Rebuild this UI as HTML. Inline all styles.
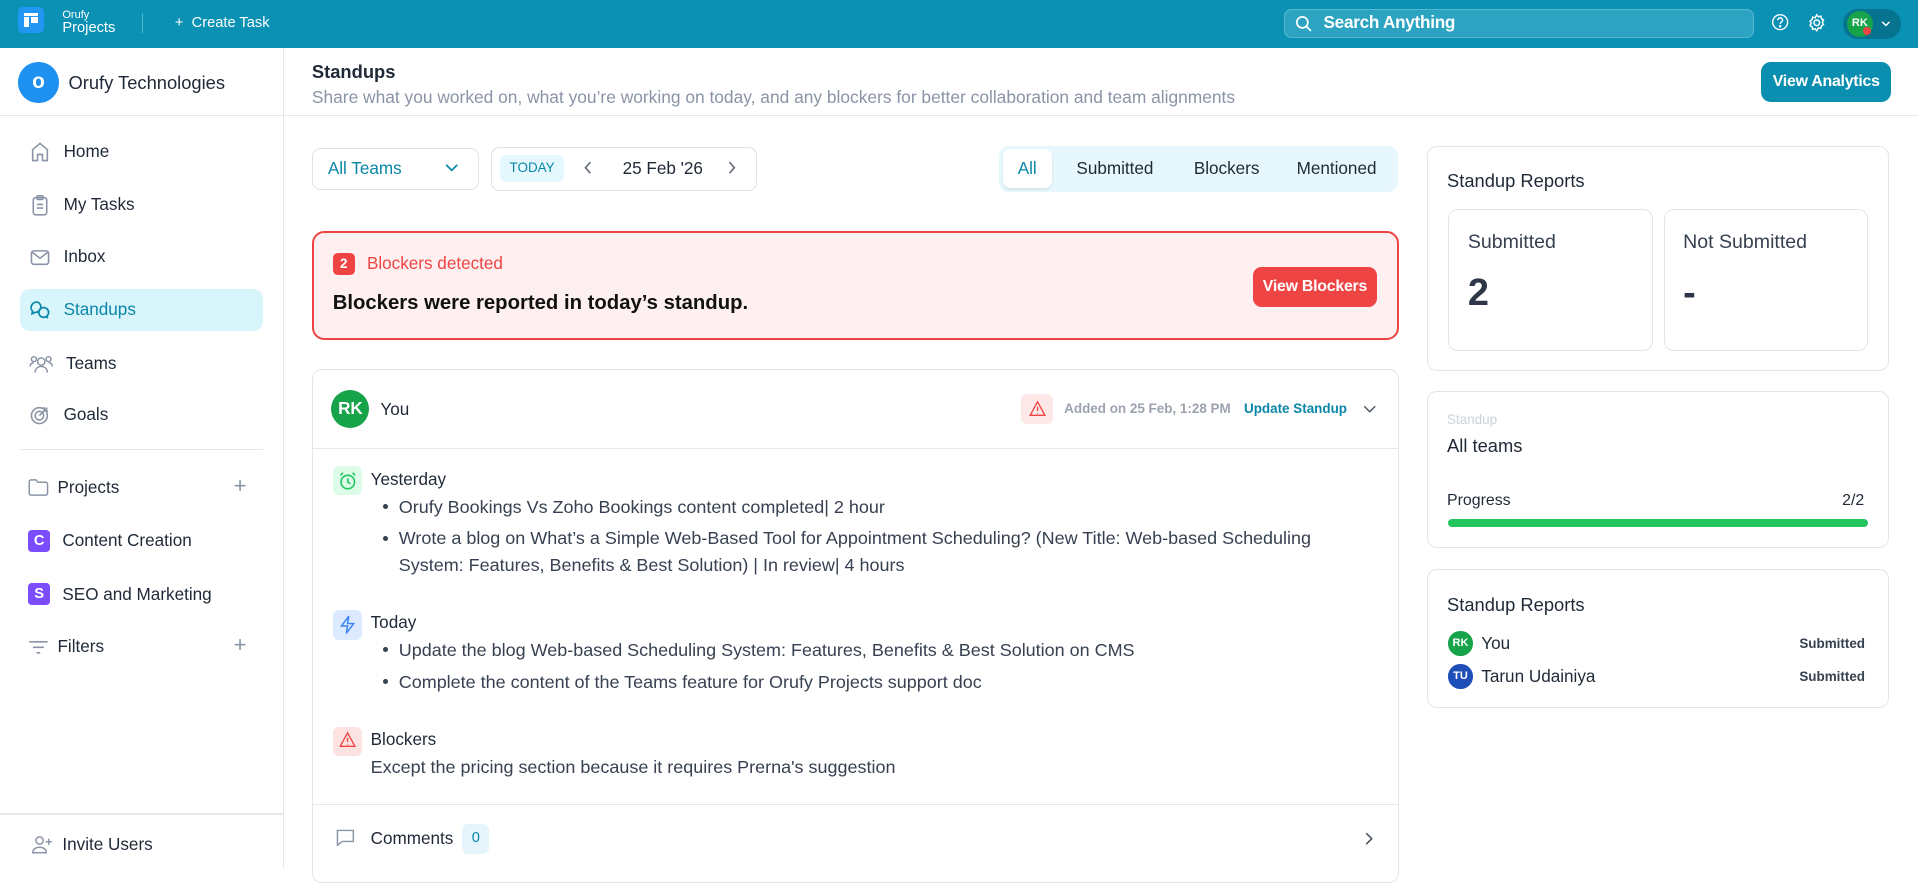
<!DOCTYPE html>
<html><head><meta charset="utf-8"><style>
html{zoom:1.2232}
*{box-sizing:border-box;margin:0;padding:0}
body{width:1568px;height:710px;overflow:hidden;font-family:"Liberation Sans",sans-serif;color:#1f2937;background:#fff;position:relative}
.a{position:absolute}
.t{white-space:nowrap}
svg{display:block}
.nav{position:absolute;left:16px;width:199px;height:35px;display:flex;align-items:center;padding-left:8px;font-size:14px;color:#1f2937;border-radius:8px}
.nav svg{margin-right:10px}
.card{position:absolute;border:1px solid #e2e5ea;border-radius:8px;background:#fff}
.bul{position:absolute;left:313px;width:4px;height:4px;border-radius:50%;background:#374151}
.txt{position:absolute;left:326px;font-size:14.7px;color:#374151;white-space:nowrap}
</style></head><body>
<!-- topbar -->
<div class="a" style="left:0;top:0;width:1568px;height:39px;background:#0a91b4"></div>
<div class="a" style="left:15px;top:6px;width:21px;height:21px;background:#2196f3;border-radius:4px">
<div class="a" style="left:5px;top:5px;width:11px;height:2px;background:#fff"></div>
<div class="a" style="left:5px;top:8px;width:4px;height:8px;background:#fff"></div>
<div class="a" style="left:10px;top:8px;width:6px;height:5px;background:#fff"></div></div>
<div class="a t" style="left:51px;top:7px;font-size:9px;color:#fff">Orufy</div>
<div class="a t" style="left:51px;top:16px;font-size:12px;color:#fff">Projects</div>
<div class="a" style="left:116px;top:11px;width:1px;height:16px;background:#4fb5cf"></div>
<div class="a t" style="left:143px;top:12px;font-size:12px;color:#fff">+&nbsp; Create Task</div>
<div class="a" style="left:1050px;top:7px;width:384px;height:24px;background:#2ca4c1;border:1px solid #55b8d0;border-radius:6px"></div>
<svg class="a" style="left:1059px;top:12px" width="14" height="14" viewBox="0 0 14 14" fill="none" stroke="#fff" stroke-width="1.4"><circle cx="6" cy="6" r="4.5"/><path d="M9.5 9.5L13 13"/></svg>
<div class="a t" style="left:1082px;top:11px;font-size:14px;color:#fff;font-weight:bold;letter-spacing:-0.2px">Search Anything</div>
<svg class="a" style="left:1448px;top:11px" width="15" height="15" viewBox="0 0 16 16" fill="none" stroke="#fff" stroke-width="1.2"><circle cx="8" cy="8" r="6.5"/><path d="M6 6.3a2 2 0 113 1.7c-.7.4-1 .8-1 1.6"/><circle cx="8" cy="11.6" r=".5" fill="#fff"/></svg>
<svg class="a" style="left:1477px;top:11px" width="16" height="16" viewBox="0 0 16 16" fill="none" stroke="#fff" stroke-width="1.2"><circle cx="8" cy="8" r="2.3"/><path d="M8 1.5l1.3 1.6 2-.5.5 2 1.7 1.2-1 1.8 1 1.8-1.7 1.2-.5 2-2-.5L8 14.5l-1.3-1.6-2 .5-.5-2L2.5 10.2l1-1.8-1-1.8 1.7-1.2.5-2 2 .5z"/></svg>
<div class="a" style="left:1507px;top:7px;width:47px;height:25px;background:#07748f;border-radius:13px"></div>
<div class="a" style="left:1510px;top:9px;width:21px;height:21px;background:#16a34a;border-radius:50%;color:#fff;font-size:9px;font-weight:bold;text-align:center;line-height:21px">RK</div>
<div class="a" style="left:1523px;top:22px;width:7px;height:7px;background:#ef4444;border-radius:50%"></div>
<svg class="a" style="left:1538px;top:16px" width="8" height="6" viewBox="0 0 8 6" fill="none" stroke="#fff" stroke-width="1.2"><path d="M1 1.5l3 3 3-3"/></svg>
<!-- sidebar -->
<div class="a" style="left:231px;top:39px;width:1px;height:671px;background:#e5e7eb"></div>
<div class="a" style="left:0;top:94px;width:1568px;height:1px;background:#e5e7eb"></div>
<div class="a" style="left:15px;top:51px;width:33px;height:33px;border-radius:50%;background:#1e90f0;color:#fff;font-weight:bold;font-size:17px;text-align:center;line-height:33px">o</div>
<div class="a t" style="left:56px;top:59px;font-size:15px;color:#1f2937">Orufy Technologies</div>
<div class="nav" style="top:107px"><svg width="18" height="18" viewBox="0 0 18 18" fill="none" stroke="#8a94a6" stroke-width="1.3"><path d="M3 16V7l6-5 6 5v9h-4v-5H7v5z"/></svg>Home</div>
<div class="nav" style="top:150px"><svg width="18" height="18" viewBox="0 0 18 18" fill="none" stroke="#8a94a6" stroke-width="1.3"><rect x="3.5" y="3" width="11" height="14" rx="2"/><rect x="6.5" y="1.5" width="5" height="3" rx="1"/><path d="M6.5 8.5h5M6.5 11.5h5"/></svg>My Tasks</div>
<div class="nav" style="top:193px"><svg width="18" height="18" viewBox="0 0 18 18" fill="none" stroke="#8a94a6" stroke-width="1.3"><rect x="2" y="4" width="14" height="11" rx="2"/><path d="M2.5 5l6.5 5 6.5-5"/></svg>Inbox</div>
<div class="nav" style="top:236px;background:#d9f5fc;color:#0a87a8"><svg width="18" height="18" viewBox="0 0 18 18" fill="none" stroke="#0a87a8" stroke-width="1.4"><path d="M7 2.5a5 4.5 0 00-4 7.5L2.5 12l2.5-1a5 4.5 0 002-8.5z"/><circle cx="12" cy="11" r="4"/><path d="M14 14.5l1.5 1"/></svg>Standups</div>
<div class="nav" style="top:280px"><svg width="20" height="18" viewBox="0 0 20 18" fill="none" stroke="#8a94a6" stroke-width="1.2"><circle cx="10" cy="7" r="3"/><path d="M5 16c0-3 2-5 5-5s5 2 5 5"/><circle cx="4" cy="5" r="2"/><circle cx="16" cy="5" r="2"/><path d="M1 11c0-2 1-3 3-3M19 11c0-2-1-3-3-3"/></svg>Teams</div>
<div class="nav" style="top:322px"><svg width="18" height="18" viewBox="0 0 18 18" fill="none" stroke="#8a94a6" stroke-width="1.3"><circle cx="8.5" cy="9.5" r="6.5"/><circle cx="8.5" cy="9.5" r="3.5"/><path d="M8.5 9.5L15 3M12.5 2.5V5.5h3"/></svg>Goals</div>
<div class="a" style="left:16px;top:367px;width:199px;height:1px;background:#e5e7eb"></div>
<svg class="a" style="left:23px;top:391px" width="17" height="15" viewBox="0 0 17 15" fill="none" stroke="#8a94a6" stroke-width="1.2"><path d="M1 3a1.5 1.5 0 011.5-1.5h4l1.5 2h6.5A1.5 1.5 0 0116 5v7.5a1.5 1.5 0 01-1.5 1.5h-12A1.5 1.5 0 011 12.5z"/></svg>
<div class="a t" style="left:47px;top:391px;font-size:14px">Projects</div>
<div class="a" style="left:191px;top:387px;font-size:18px;color:#8a94a6">+</div>
<div class="a" style="left:23px;top:433px;width:18px;height:18px;background:#7c4dff;border-radius:3px;color:#fff;font-size:12px;font-weight:bold;text-align:center;line-height:18px">C</div>
<div class="a t" style="left:51px;top:434px;font-size:14px">Content Creation</div>
<div class="a" style="left:23px;top:477px;width:18px;height:18px;background:#7c4dff;border-radius:3px;color:#fff;font-size:12px;font-weight:bold;text-align:center;line-height:18px">S</div>
<div class="a t" style="left:51px;top:478px;font-size:14px">SEO and Marketing</div>
<svg class="a" style="left:23px;top:523px" width="17" height="12" viewBox="0 0 17 12" fill="none" stroke="#8a94a6" stroke-width="1.3"><path d="M1 1.5h15M4 6h9M7 10.5h3"/></svg>
<div class="a t" style="left:47px;top:521px;font-size:14px">Filters</div>
<div class="a" style="left:191px;top:517px;font-size:18px;color:#8a94a6">+</div>
<div class="a" style="left:0;top:665px;width:231px;height:1px;background:#e5e7eb"></div>
<svg class="a" style="left:25px;top:683px" width="18" height="16" viewBox="0 0 18 16" fill="none" stroke="#8a94a6" stroke-width="1.2"><circle cx="7" cy="4.5" r="3"/><path d="M1.5 14.5c0-3 2.5-4.5 5.5-4.5s5.5 1.5 5.5 4.5z"/><path d="M14.5 3v5M12 5.5h5"/></svg>
<div class="a t" style="left:51px;top:683px;font-size:14px">Invite Users</div>
<!-- header -->
<div class="a t" style="left:255px;top:50px;font-size:15px;font-weight:bold;color:#1f2937">Standups</div>
<div class="a t" style="left:255px;top:71px;font-size:14.2px;color:#8a94a6">Share what you worked on, what you’re working on today, and any blockers for better collaboration and team alignments</div>
<div class="a t" style="left:1440px;top:51px;width:106px;height:32px;background:#0b8fb0;border-radius:8px;color:#fff;font-size:13px;font-weight:bold;text-align:center;line-height:32px;letter-spacing:-0.2px">View Analytics</div>
<!-- controls -->
<div class="a" style="left:255px;top:121px;width:137px;height:34px;border:1px solid #dfe3e8;border-radius:7px"></div>
<div class="a t" style="left:268px;top:130px;font-size:14px;color:#0a87a8">All Teams</div>
<svg class="a" style="left:364px;top:133px" width="11" height="8" viewBox="0 0 11 8" fill="none" stroke="#0a87a8" stroke-width="1.4"><path d="M1 1.5l4.5 4.5 4.5-4.5"/></svg>
<div class="a" style="left:401px;top:120px;width:218px;height:36px;border:1px solid #dfe3e8;border-radius:7px"></div>
<div class="a t" style="left:409px;top:127px;width:52px;height:22px;background:#e4f8fd;border-radius:5px;font-size:11px;color:#0a87a8;text-align:center;line-height:22px">TODAY</div>
<svg class="a" style="left:477px;top:132px" width="8" height="11" viewBox="0 0 8 11" fill="none" stroke="#6b7280" stroke-width="1.4"><path d="M6 1L2 5.5 6 10"/></svg>
<div class="a t" style="left:509px;top:130px;font-size:14px;color:#1f2937">25 Feb '26</div>
<svg class="a" style="left:594px;top:132px" width="8" height="11" viewBox="0 0 8 11" fill="none" stroke="#6b7280" stroke-width="1.4"><path d="M2 1l4 4.5L2 10"/></svg>
<div class="a" style="left:817px;top:119px;width:326px;height:38px;background:#e6f8fd;border-radius:8px"></div>
<div class="a" style="left:820px;top:122px;width:40px;height:32px;background:#fff;border-radius:6px;box-shadow:0 1px 2px rgba(0,0,0,.1)"></div>
<div class="a t" style="left:832px;top:130px;font-size:14px;color:#0a87a8">All</div>
<div class="a t" style="left:880px;top:130px;font-size:14px;color:#1f2937">Submitted</div>
<div class="a t" style="left:976px;top:130px;font-size:14px;color:#1f2937">Blockers</div>
<div class="a t" style="left:1060px;top:130px;font-size:14px;color:#1f2937">Mentioned</div>
<!-- alert -->
<div class="a" style="left:255px;top:189px;width:889px;height:89px;background:#fef0f0;border:2px solid #ef4444;border-radius:10px"></div>
<div class="a" style="left:272px;top:207px;width:18px;height:18px;background:#ef4444;border-radius:4px;color:#fff;font-size:11px;font-weight:bold;text-align:center;line-height:18px">2</div>
<div class="a t" style="left:300px;top:208px;font-size:14px;color:#ef4444">Blockers detected</div>
<div class="a t" style="left:272px;top:239px;font-size:16.6px;font-weight:bold;color:#111">Blockers were reported in today’s standup.</div>
<div class="a t" style="left:1024px;top:218px;width:102px;height:33px;background:#ef4444;border-radius:7px;color:#fff;font-size:13px;font-weight:bold;text-align:center;line-height:33px;letter-spacing:-0.2px">View Blockers</div>
<!-- standup card -->
<div class="card" style="left:255px;top:302px;width:889px;height:420px"></div>
<div class="a" style="left:256px;top:366px;width:887px;height:1px;background:#e5e7eb"></div>
<div class="a" style="left:271px;top:319px;width:31px;height:31px;border-radius:50%;background:#16a34a;color:#fff;font-size:14px;font-weight:bold;text-align:center;line-height:31px">RK</div>
<div class="a t" style="left:311px;top:327px;font-size:14px">You</div>
<div class="a" style="left:835px;top:322px;width:26px;height:25px;background:#fde8e8;border-radius:5px"></div>
<svg class="a" style="left:841px;top:327px" width="14" height="14" viewBox="0 0 14 14" fill="none" stroke="#ef4444" stroke-width="1.1"><path d="M7 1.5L13 12.5H1z"/><path d="M7 5.5v3.5M7 10.5v.6"/></svg>
<div class="a t" style="left:870px;top:328px;font-size:11px;font-weight:bold;color:#9ca3af">Added on 25 Feb, 1:28 PM</div>
<div class="a t" style="left:1017px;top:328px;font-size:11px;font-weight:bold;color:#0a87a8">Update Standup</div>
<svg class="a" style="left:1114px;top:331px" width="11" height="7" viewBox="0 0 11 7" fill="none" stroke="#4b5563" stroke-width="1.2"><path d="M1 1l4.5 4.5L10 1"/></svg>
<div class="a" style="left:272px;top:381px;width:24px;height:24px;background:#dcfce7;border-radius:5px"></div>
<svg class="a" style="left:276px;top:385px" width="16" height="16" viewBox="0 0 16 16" fill="none" stroke="#22c55e" stroke-width="1.3"><circle cx="8" cy="9" r="5.5"/><path d="M8 6v3l2 1.5M2 3.5L4 1.5M14 3.5L12 1.5"/></svg>
<div class="a t" style="left:303px;top:384px;font-size:14px">Yesterday</div>
<div class="bul" style="top:412px"></div><div class="txt" style="top:406px">Orufy Bookings Vs Zoho Bookings content completed| 2 hour</div>
<div class="bul" style="top:438px"></div><div class="txt" style="top:432px">Wrote a blog on What’s a Simple Web-Based Tool for Appointment Scheduling? (New Title: Web-based Scheduling</div>
<div class="txt" style="top:454px">System: Features, Benefits &amp; Best Solution) | In review| 4 hours</div>
<div class="a" style="left:272px;top:499px;width:24px;height:24px;background:#dbeafe;border-radius:5px"></div>
<svg class="a" style="left:277px;top:503px" width="14" height="16" viewBox="0 0 14 16" fill="none" stroke="#3b82f6" stroke-width="1.2"><path d="M8 1L2 9h5l-1 6 6-8H7z"/></svg>
<div class="a t" style="left:303px;top:501px;font-size:14px">Today</div>
<div class="bul" style="top:529px"></div><div class="txt" style="top:523px">Update the blog Web-based Scheduling System: Features, Benefits &amp; Best Solution on CMS</div>
<div class="bul" style="top:555px"></div><div class="txt" style="top:549px">Complete the content of the Teams feature for Orufy Projects support doc</div>
<div class="a" style="left:272px;top:594px;width:24px;height:24px;background:#fde2e2;border-radius:5px"></div>
<svg class="a" style="left:277px;top:598px" width="14" height="14" viewBox="0 0 14 14" fill="none" stroke="#ef4444" stroke-width="1.1"><path d="M7 1.5L13 12.5H1z"/><path d="M7 5.5v3.5M7 10.5v.6"/></svg>
<div class="a t" style="left:303px;top:597px;font-size:14px">Blockers</div>
<div class="a t" style="left:303px;top:619px;font-size:14.7px;color:#374151">Except the pricing section because it requires Prerna's suggestion</div>
<div class="a" style="left:256px;top:657px;width:887px;height:1px;background:#e5e7eb"></div>
<svg class="a" style="left:274px;top:677px" width="17" height="16" viewBox="0 0 17 16" fill="none" stroke="#8a94a6" stroke-width="1.2"><path d="M2 2h13v9H6l-4 3z"/><path d="M5.5 6.5h.1M8.5 6.5h.1M11.5 6.5h.1" stroke-width="1.6"/></svg>
<div class="a t" style="left:303px;top:678px;font-size:14px">Comments</div>
<div class="a" style="left:378px;top:674px;width:22px;height:24px;background:#e6f4fb;border-radius:5px;color:#0a87a8;font-size:12px;text-align:center;line-height:24px">0</div>
<svg class="a" style="left:1116px;top:680px" width="7" height="11" viewBox="0 0 7 11" fill="none" stroke="#4b5563" stroke-width="1.3"><path d="M1 1l4.5 4.5L1 10"/></svg>
<!-- right column -->
<div class="card" style="left:1167px;top:119px;width:377px;height:184px"></div>
<div class="a t" style="left:1183px;top:139px;font-size:15px;color:#1f2937">Standup Reports</div>
<div class="card" style="left:1184px;top:171px;width:167px;height:116px"></div>
<div class="a t" style="left:1200px;top:189px;font-size:16px;color:#374151">Submitted</div>
<div class="a t" style="left:1200px;top:222px;font-size:31px;font-weight:bold;color:#2d3748">2</div>
<div class="card" style="left:1360px;top:171px;width:167px;height:116px"></div>
<div class="a t" style="left:1376px;top:189px;font-size:16px;color:#374151">Not Submitted</div>
<div class="a t" style="left:1376px;top:222px;font-size:31px;font-weight:bold;color:#2d3748">-</div>
<div class="card" style="left:1167px;top:320px;width:377px;height:128px"></div>
<div class="a t" style="left:1183px;top:337px;font-size:11px;color:#cbd2da">Standup</div>
<div class="a t" style="left:1183px;top:356px;font-size:15px;color:#1f2937">All teams</div>
<div class="a t" style="left:1183px;top:402px;font-size:13px;color:#1f2937">Progress</div>
<div class="a t" style="left:1506px;top:402px;font-size:13px;color:#1f2937">2/2</div>
<div class="a" style="left:1184px;top:424px;width:343px;height:7px;background:#22c55e;border-radius:4px"></div>
<div class="card" style="left:1167px;top:465px;width:377px;height:114px"></div>
<div class="a t" style="left:1183px;top:486px;font-size:15px;color:#1f2937">Standup Reports</div>
<div class="a" style="left:1184px;top:516px;width:20px;height:20px;border-radius:50%;background:#16a34a;color:#fff;font-size:9px;font-weight:bold;text-align:center;line-height:20px">RK</div>
<div class="a t" style="left:1211px;top:518px;font-size:14px">You</div>
<div class="a t" style="left:1471px;top:520px;font-size:11px;font-weight:bold;color:#374151">Submitted</div>
<div class="a" style="left:1184px;top:543px;width:20px;height:20px;border-radius:50%;background:#1e4fb8;color:#fff;font-size:9px;font-weight:bold;text-align:center;line-height:20px">TU</div>
<div class="a t" style="left:1211px;top:545px;font-size:14px">Tarun Udainiya</div>
<div class="a t" style="left:1471px;top:547px;font-size:11px;font-weight:bold;color:#374151">Submitted</div>
</body></html>
